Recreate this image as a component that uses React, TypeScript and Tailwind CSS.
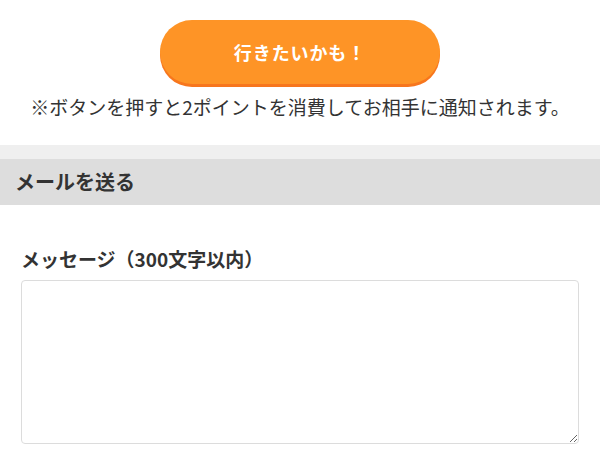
import React from "react";

export default function App() {
  return (
    <div
      className="w-[600px] bg-white text-[#333]"
      style={{ fontFamily: '"Noto Sans CJK JP", "Noto Sans", sans-serif' }}
    >
      <div className="flex flex-col items-center pt-5">
        <button className="flex h-[64px] w-[280px] items-center justify-center rounded-full bg-[#fe9426] text-[18px] font-bold tracking-wider text-white shadow-[0_3px_0_#f7761d]">
          行きたいかも！
        </button>
        <p className="mt-[10px] text-[19px] leading-[26px] text-[#333]">
          ※ボタンを押すと2ポイントを消費してお相手に通知されます。
        </p>
      </div>

      <div className="mt-[25px] h-[14px] bg-[#efefef]" />
      <div className="flex h-[46px] items-center bg-[#dddddd] px-[15px]">
        <h2 className="text-[20px] font-bold text-[#333]">メールを送る</h2>
      </div>

      <div className="px-[21px] pt-[41px]">
        <label className="block text-[19px] font-bold leading-[26px] text-[#333]">
          メッセージ（300文字以内）
        </label>
        <textarea className="mt-[8px] block h-[164px] w-full rounded-[4px] border border-[#dcdcdc] p-2 text-[16px]" />
      </div>
    </div>
  );
}
